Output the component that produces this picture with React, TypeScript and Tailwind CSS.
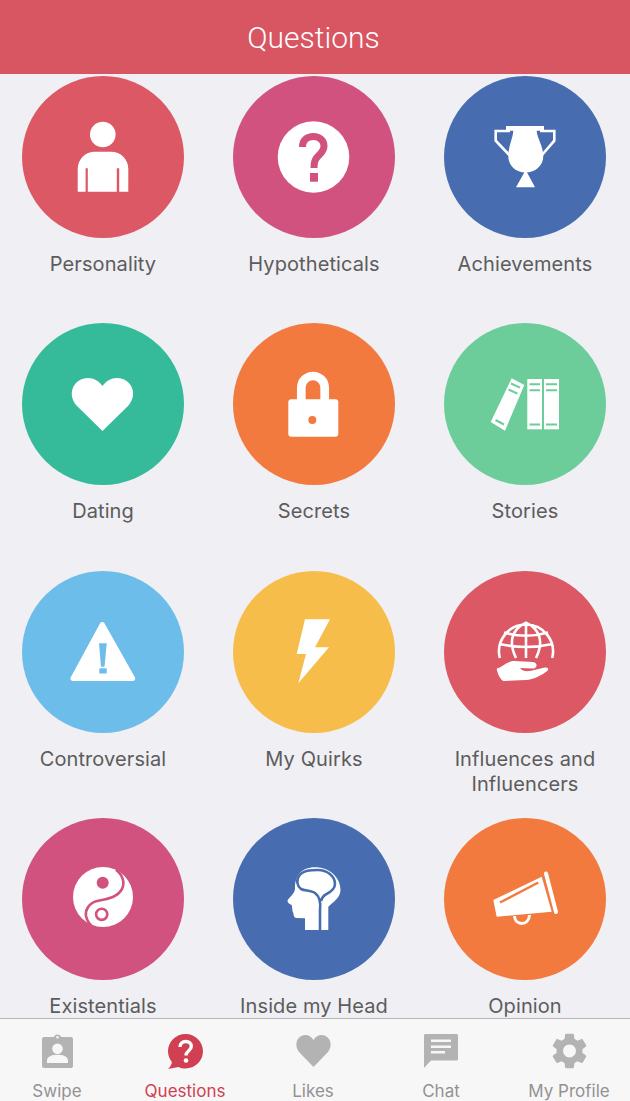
import React from 'react';

const Person = () => (
  <>
    <circle cx="80.8" cy="58.5" r="12.8" fill="#fff" />
    <path
      fillRule="evenodd"
      fill="#fff"
      d="M55.7 115.7V92.7A17 17 0 0 1 72.7 75.7H89.3A17 17 0 0 1 106.3 92.7V115.7ZM63.6 92.3V115.7H65.8V92.3ZM94.8 92.3V115.7H97.2V92.3Z"
    />
  </>
);

const Question = () => (
  <>
    <circle cx="80.5" cy="81" r="35.8" fill="#fff" />
    <path
      d="M69.5 71C69.5 64 74 60.5 80.5 60.5C87 60.5 91 65 91 70C91 76 86 78.5 83.5 82C81.5 84.5 81 87 81 92"
      fill="none"
      stroke="#d1527e"
      strokeWidth="7"
    />
    <rect x="77" y="97" width="8" height="8.7" fill="#d1527e" />
  </>
);

const Trophy = () => (
  <>
    <path d="M62 50H100V54.7H92.7C93 62 99.3 70 99.3 80C99.3 90 91 96.5 81.7 96.5C72 96.5 64.3 90 64.3 80C64.3 70 69 62 69.3 54.7H62Z" fill="#fff" />
    <path d="M81.7 94L91 111.3H72Z" fill="#fff" />
    <path d="M66 55H51.7V64.7L65.3 79M96 55H110.3V64.7L98 79" fill="none" stroke="#fff" strokeWidth="2.6" />
  </>
);

const Heart = () => (
  <path d="M80.5 108L55 83C44 71 52 55 66 55C72 55 77 58 80.5 63C84 58 89 55 95 55C109 55 117 71 106 83Z" fill="#fff" />
);

const Lock = () => (
  <>
    <path d="M68.3 80V64.7A11.7 11.7 0 0 1 91.7 64.7V80" fill="none" stroke="#fff" strokeWidth="8.7" />
    <rect x="55.3" y="76.3" width="50" height="37.4" rx="3" fill="#fff" />
    <circle cx="79.3" cy="97" r="4" fill="#f27a3f" />
  </>
);

const Books = () => (
  <>
    <path d="M67.7 55.3L80.3 62L61 107.7L46.7 99Z" fill="#fff" />
    <path d="M67 60.5L76 64.7M64.5 66.5L73.5 70.7M51.5 97L60 101.5" stroke="#6ccd9b" strokeWidth="2" />
    <rect x="83.3" y="56" width="14.7" height="50.3" fill="#fff" />
    <rect x="100" y="56" width="15" height="50.3" fill="#fff" />
    <path d="M85.5 61.3H96M85.5 67.3H96M85.5 101.5H96M102 61.3H113M102 67.3H113M102 101.5H113" stroke="#6ccd9b" strokeWidth="2" />
  </>
);

const Warning = () => (
  <>
    <path d="M80.3 53.5L51 107.5H110.7Z" fill="#fff" stroke="#fff" strokeWidth="5" strokeLinejoin="round" />
    <path d="M77 72.3H84.7L82.5 95.7H79Z" fill="#6dbdea" />
    <rect x="77.3" y="97.3" width="7.4" height="5.2" fill="#6dbdea" />
  </>
);

const Bolt = () => <path d="M72 48.3H97L82 76.3H96L65.3 112.3L73 83H63.7Z" fill="#fff" />;

const GlobeHand = () => (
  <>
    <path
      d="M55.8 87A27 27 0 1 1 108.2 87M60 61.5Q82 68 104 61.5M55.6 73Q82 79 108.4 73M82 51.7V87M72 87C64 71 68 58 82 51.7C96 58 100 71 92 87"
      fill="none"
      stroke="#fff"
      strokeWidth="2.6"
    />
    <path d="M52.7 97.5C59 96 63 90 70 90L89 91C94 91.5 93.5 97.5 89 97.5L76 97C78 100 82 100.5 86 100L101 96.5C105 96 105 99 102.5 100.5C96 105 90 108.5 82 109L60 110C57 110 53 102 52.7 97.5Z" fill="#fff" />
  </>
);

const YinYang = () => (
  <>
    <circle cx="81" cy="79" r="30" fill="#fff" />
    <path
      d="M94 52C101 57 103 65 100 71C95 80 84 81 75 83C67 85 63 92 64 98C65 103 67 106 72 110"
      fill="none"
      stroke="#d1527e"
      strokeWidth="2.6"
    />
    <circle cx="80.7" cy="64.7" r="6" fill="#d1527e" />
    <circle cx="79.7" cy="96.3" r="5.6" fill="none" stroke="#d1527e" strokeWidth="2.6" />
  </>
);

const Head = () => (
  <>
    <path d="M82 49.3C97 49.3 107.5 60 107.5 72C107.5 80 100 84 95.3 88.7V112H72V100.3L63 100C60 99 61 96 60.3 95.3C59 93 59.5 90 58.7 87C56 86 54 84 54.7 82C58 78 62 75 62 70.3C62 58 68 49.3 82 49.3Z" fill="#fff" />
    <path
      d="M87 113V92C88 84 86 78 82 75C78 72 72 73 68 71C64 68 63 62 66 58C70 52 78 52 85 52C94 52 102 58 102 66C102 72 96 75 92 77C90 78 89 80 88 83"
      fill="none"
      stroke="#476db0"
      strokeWidth="2.6"
    />
  </>
);

const Megaphone = () => (
  <>
    <path d="M49.3 82L97.7 58.7L107.7 93.7L52.7 98.7Z" fill="#fff" />
    <path d="M102 55.5L112 94" stroke="#fff" strokeWidth="4" strokeLinecap="round" />
    <path d="M56 84.5L94.3 64.5" stroke="#f27a3f" strokeWidth="2.4" />
    <path d="M70.5 98C71 108 85 108 85.5 97" fill="none" stroke="#fff" strokeWidth="3" />
  </>
);

const topics = [
  { label: 'Personality', bg: 'bg-[#dc5864]', icon: <Person /> },
  { label: 'Hypotheticals', bg: 'bg-[#d1527e]', icon: <Question /> },
  { label: 'Achievements', bg: 'bg-[#476db0]', icon: <Trophy /> },
  { label: 'Dating', bg: 'bg-[#35bb9a]', icon: <Heart /> },
  { label: 'Secrets', bg: 'bg-[#f27a3f]', icon: <Lock /> },
  { label: 'Stories', bg: 'bg-[#6ccd9b]', icon: <Books /> },
  { label: 'Controversial', bg: 'bg-[#6dbdea]', icon: <Warning /> },
  { label: 'My Quirks', bg: 'bg-[#f7bd4a]', icon: <Bolt /> },
  { label: 'Influences and Influencers', bg: 'bg-[#dc5864]', icon: <GlobeHand /> },
  { label: 'Existentials', bg: 'bg-[#d1527e]', icon: <YinYang /> },
  { label: 'Inside my Head', bg: 'bg-[#476db0]', icon: <Head /> },
  { label: 'Opinion', bg: 'bg-[#f27a3f]', icon: <Megaphone /> },
];

const Badge = () => (
  <svg width="31" height="35" viewBox="0 0 31 35" fill="#b3b3b3">
    <path
      fillRule="evenodd"
      d="M2 3H12C12 -0.5 19 -0.5 19 3H29C30 3 31 4 31 5V32C31 33 30 34 29 34H2C1 34 0 33 0 32V5C0 4 1 3 2 3ZM15.5 2A1.3 1.3 0 1 0 15.5 4.6A1.3 1.3 0 1 0 15.5 2ZM15.5 9.5A5.3 5.3 0 1 0 15.5 20.1A5.3 5.3 0 1 0 15.5 9.5ZM5 29H26V26.5C26 22 20 20.8 15.5 20.8C11 20.8 5 22 5 26.5Z"
    />
  </svg>
);

const Bubble = () => (
  <svg width="35" height="35" viewBox="0 0 35 35">
    <path d="M17.5 0C27 0 35 7.5 35 17.3C35 27 27 34.5 17.5 34.5C15 34.5 12.5 34 10.5 33L0 35C2.5 32.5 4 30 3.8 28C1.5 25 0 21.5 0 17.3C0 7.5 8 0 17.5 0Z" fill="#d13f52" />
    <path d="M12 13C12 9.5 14.5 7.5 17.7 7.5C21 7.5 23.3 9.5 23.3 12.5C23.3 16.5 18 17 18 21.5" fill="none" stroke="#fff" strokeWidth="3.4" />
    <circle cx="18" cy="26.5" r="2.3" fill="#fff" />
  </svg>
);

const TabHeart = () => (
  <svg width="35" height="32" viewBox="0 0 35 32" fill="#b3b3b3">
    <path d="M17.5 32L3 17C-3 9 2 0 9.5 0C13 0 15.8 2 17.5 5C19.2 2 22 0 25.5 0C33 0 38 9 32 17Z" />
  </svg>
);

const Chat = () => (
  <svg width="34" height="34" viewBox="0 0 34 34" fill="#b3b3b3">
    <path
      fillRule="evenodd"
      d="M1.5 0H32.5C33.3 0 34 .7 34 1.5V25C34 25.8 33.3 26.5 32.5 26.5H7L0 34V1.5C0 .7 .7 0 1.5 0ZM7 5.5V8H27V5.5ZM7 11.5V14H27V11.5ZM7 17V19.5H21V17Z"
    />
  </svg>
);

const Gear = () => (
  <svg width="35" height="36" viewBox="2.5 2 19 20" fill="#b3b3b3">
    <path d="M19.14 12.94c.04-.3.06-.61.06-.94 0-.32-.02-.64-.07-.94l2.03-1.58c.18-.14.23-.41.12-.61l-1.92-3.32c-.12-.22-.37-.29-.59-.22l-2.39.96c-.5-.38-1.03-.7-1.62-.94l-.36-2.54c-.04-.24-.24-.41-.48-.41h-3.84c-.24 0-.43.17-.47.41l-.36 2.54c-.59.24-1.13.57-1.62.94l-2.39-.96c-.22-.08-.47 0-.59.22L2.74 8.87c-.12.21-.08.47.12.61l2.03 1.58c-.05.3-.09.63-.09.94s.02.64.07.94l-2.03 1.58c-.18.14-.23.41-.12.61l1.92 3.32c.12.22.37.29.59.22l2.39-.96c.5.38 1.03.7 1.62.94l.36 2.54c.05.24.24.41.48.41h3.84c.24 0 .44-.17.47-.41l.36-2.54c.59-.24 1.13-.56 1.62-.94l2.39.96c.22.08.47 0 .59-.22l1.92-3.32c.12-.22.07-.47-.12-.61l-2.01-1.58zM12 15.6c-1.98 0-3.6-1.62-3.6-3.6s1.62-3.6 3.6-3.6 3.6 1.62 3.6 3.6-1.62 3.6-3.6 3.6z" />
  </svg>
);

const tabs = [
  { label: 'Swipe', icon: <Badge />, active: false },
  { label: 'Questions', icon: <Bubble />, active: true },
  { label: 'Likes', icon: <TabHeart />, active: false },
  { label: 'Chat', icon: <Chat />, active: false },
  { label: 'My Profile', icon: <Gear />, active: false },
];

const App: React.FC = () => {
  return (
    <div className="flex flex-col h-[1101px] w-[630px] overflow-hidden bg-[#efeff4] font-['Inter',sans-serif]">
      <header className="h-[74px] shrink-0 bg-[#d85562] flex items-center justify-center pr-[3px] text-white text-[30px] font-['Roboto',sans-serif] font-light">
        Questions
      </header>

      <main className="flex-1 min-h-0 overflow-hidden pl-[22px] pt-[2px]">
        <div className="grid grid-cols-[162px_162px_162px] gap-x-[49px] auto-rows-[247.33px]">
          {topics.map((topic) => (
            <div key={topic.label} className="flex flex-col items-center">
              <div className={`w-[162px] h-[162px] rounded-full shrink-0 ${topic.bg}`}>
                <svg width="162" height="162" viewBox="0 0 162 162">
                  {topic.icon}
                </svg>
              </div>
              <p className="mt-[14px] text-center text-[20px] leading-[25px] tracking-[0.1px] text-[#5c5c5c]">{topic.label}</p>
            </div>
          ))}
        </div>
      </main>

      <nav className="h-[83px] shrink-0 border-t border-[#b4b4b6] bg-[#f7f7f8] -ml-[7px] grid grid-cols-[128px_128px_128px_128px_128px]">
        {tabs.map((tab) => (
          <div key={tab.label} className="flex flex-col items-center">
            <div className="h-[36px] mt-[14px] flex items-center justify-center">{tab.icon}</div>
            <span className={`mt-[12px] text-[17px] leading-[20px] whitespace-nowrap ${tab.active ? 'text-[#d13f52]' : 'text-[#929292]'}`}>
              {tab.label}
            </span>
          </div>
        ))}
      </nav>
    </div>
  );
};

export default App;
